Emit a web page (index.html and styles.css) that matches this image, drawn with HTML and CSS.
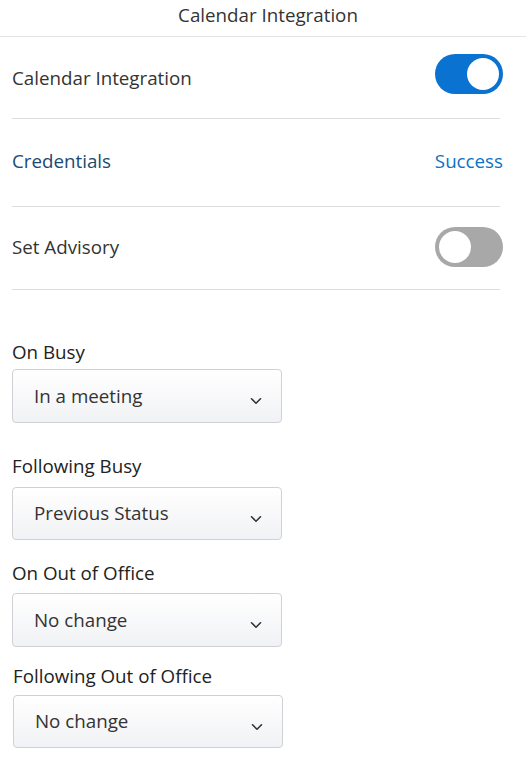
FILE: index.html
```html
<!DOCTYPE html>
<html>
<head>
<meta charset="utf-8">
<link rel="stylesheet" href="styles.css">
</head>
<body>
<div class="page">
  <header class="title-bar">Calendar Integration</header>
  <div class="settings">
    <div class="row row-first">
      <span class="row-label">Calendar Integration</span>
      <span class="toggle toggle-on"><span class="knob"></span></span>
    </div>
    <div class="row row-second">
      <span class="row-label link-dark">Credentials</span>
      <span class="status">Success</span>
    </div>
    <div class="row row-third">
      <span class="row-label">Set Advisory</span>
      <span class="toggle toggle-off"><span class="knob"></span></span>
    </div>
  </div>
  <div class="form">
    <div class="field field-1">
      <div class="field-label">On Busy</div>
      <div class="select"><span>In a meeting</span><svg class="chev" width="12" height="8" viewBox="0 0 12 8"><path d="M1.5 1.8 L6 6.2 L10.5 1.8" fill="none" stroke="#333" stroke-width="1.6" stroke-linecap="round" stroke-linejoin="round"/></svg></div>
    </div>
    <div class="field field-2">
      <div class="field-label">Following Busy</div>
      <div class="select"><span>Previous Status</span><svg class="chev" width="12" height="8" viewBox="0 0 12 8"><path d="M1.5 1.8 L6 6.2 L10.5 1.8" fill="none" stroke="#333" stroke-width="1.6" stroke-linecap="round" stroke-linejoin="round"/></svg></div>
    </div>
    <div class="field field-3">
      <div class="field-label">On Out of Office</div>
      <div class="select"><span>No change</span><svg class="chev" width="12" height="8" viewBox="0 0 12 8"><path d="M1.5 1.8 L6 6.2 L10.5 1.8" fill="none" stroke="#333" stroke-width="1.6" stroke-linecap="round" stroke-linejoin="round"/></svg></div>
    </div>
    <div class="field field-4">
      <div class="field-label">Following Out of Office</div>
      <div class="select"><span>No change</span><svg class="chev" width="12" height="8" viewBox="0 0 12 8"><path d="M1.5 1.8 L6 6.2 L10.5 1.8" fill="none" stroke="#333" stroke-width="1.6" stroke-linecap="round" stroke-linejoin="round"/></svg></div>
    </div>
  </div>
</div>
</body>
</html>
```

FILE: styles.css
```css
* { box-sizing: border-box; }
html, body {
  margin: 0;
  padding: 0;
  background: #ffffff;
}
body {
  font-family: "Open Sans", Lato, "Liberation Sans", sans-serif;
  color: #333333;
  font-size: 18.75px;
}
.page {
  width: 526px;
}
.title-bar {
  height: 37px;
  border-bottom: 1px solid #e4e4e4;
  text-align: center;
  line-height: 30px;
  font-size: 18.75px;
  color: #333;
  padding-left: 10px;
}
.settings {
  padding: 0 23px 0 12px;
}
.row {
  display: flex;
  align-items: center;
  justify-content: space-between;
  border-bottom: 1px solid #dedede;
  margin-right: 3px;
}
.row > :last-child {
  margin-right: -3px;
}
.row-first {
  height: 82px;
  padding-bottom: 7px;
}
.row-first .row-label {
  margin-top: 6px;
}
.row-second {
  height: 88px;
  padding-bottom: 5px;
}
.row-third {
  height: 83px;
  padding-bottom: 3px;
}
.row-label {
  font-size: 18.75px;
  color: #333;
}
.link-dark {
  color: #1b4a70;
}
.status {
  color: #0b72c6;
  font-size: 18.75px;
}
.toggle {
  width: 68px;
  height: 40px;
  border-radius: 20px;
  display: flex;
  align-items: center;
  padding: 0 4px;
}
.toggle-on {
  background: #0a72d1;
  justify-content: flex-end;
}
.toggle-off {
  background: #a8a8a8;
  justify-content: flex-start;
}
.knob {
  width: 32px;
  height: 32px;
  border-radius: 50%;
  background: #ffffff;
}
.form {
  padding-left: 12px;
}
.field-label {
  font-size: 18.75px;
  line-height: 22px;
  color: #222;
}
.field-1 { margin-top: 51px; }
.field-1 .field-label { margin-bottom: 6px; }
.field-2 { margin-top: 32px; }
.field-2 .field-label { margin-bottom: 10px; }
.field-3 { margin-top: 22px; }
.field-3 .field-label { margin-bottom: 9px; }
.field-4 { margin-top: 18px; padding-left: 1px; }
.field-4 .field-label { margin-bottom: 8px; }
.select {
  width: 270px;
  height: 54px;
  border: 1px solid #cfd1d4;
  border-radius: 4px;
  background: linear-gradient(#ffffff, #f1f2f5);
  display: flex;
  align-items: center;
  justify-content: space-between;
  padding: 0 19px 0 21px;
  font-size: 18.75px;
  color: #333;
}
.field-2 .select { height: 53px; }
.field-4 .select { height: 53px; }
.select span {
  margin-top: -2px;
}
.chev {
  margin-top: 10px;
}
```
